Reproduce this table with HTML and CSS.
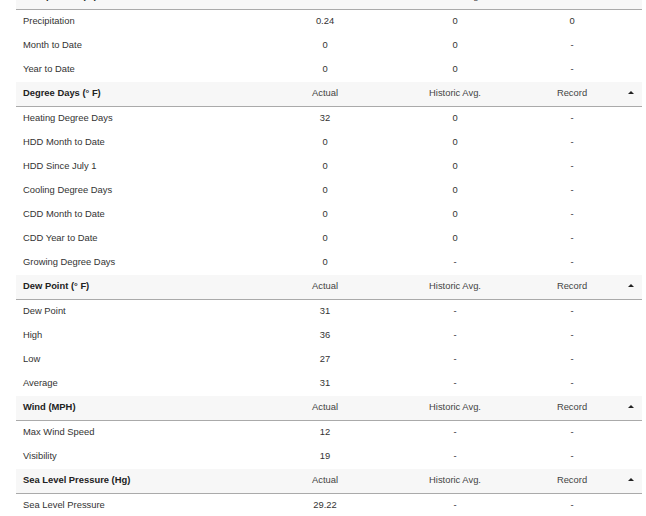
FILE: index.html
```html
<!DOCTYPE html>
<html>
<head>
<meta charset="utf-8">
<link rel="stylesheet" href="styles.css">
</head>
<body>
<div class="table">
  <div class="row head first">
    <div class="label">Precipitation (in)</div><div class="c">Actual</div><div class="c">Historic Avg.</div><div class="c">Record</div><div class="arrow"><span class="tri"></span></div>
  </div>
  <div class="row"><div class="label">Precipitation</div><div class="c">0.24</div><div class="c">0</div><div class="c">0</div><div></div></div>
  <div class="row"><div class="label">Month to Date</div><div class="c">0</div><div class="c">0</div><div class="c">-</div><div></div></div>
  <div class="row"><div class="label">Year to Date</div><div class="c">0</div><div class="c">0</div><div class="c">-</div><div></div></div>

  <div class="row head">
    <div class="label">Degree Days (° F)</div><div class="c">Actual</div><div class="c">Historic Avg.</div><div class="c">Record</div><div class="arrow"><span class="tri"></span></div>
  </div>
  <div class="row"><div class="label">Heating Degree Days</div><div class="c">32</div><div class="c">0</div><div class="c">-</div><div></div></div>
  <div class="row"><div class="label">HDD Month to Date</div><div class="c">0</div><div class="c">0</div><div class="c">-</div><div></div></div>
  <div class="row"><div class="label">HDD Since July 1</div><div class="c">0</div><div class="c">0</div><div class="c">-</div><div></div></div>
  <div class="row"><div class="label">Cooling Degree Days</div><div class="c">0</div><div class="c">0</div><div class="c">-</div><div></div></div>
  <div class="row"><div class="label">CDD Month to Date</div><div class="c">0</div><div class="c">0</div><div class="c">-</div><div></div></div>
  <div class="row"><div class="label">CDD Year to Date</div><div class="c">0</div><div class="c">0</div><div class="c">-</div><div></div></div>
  <div class="row"><div class="label">Growing Degree Days</div><div class="c">0</div><div class="c">-</div><div class="c">-</div><div></div></div>

  <div class="row head">
    <div class="label">Dew Point (° F)</div><div class="c">Actual</div><div class="c">Historic Avg.</div><div class="c">Record</div><div class="arrow"><span class="tri"></span></div>
  </div>
  <div class="row"><div class="label">Dew Point</div><div class="c">31</div><div class="c">-</div><div class="c">-</div><div></div></div>
  <div class="row"><div class="label">High</div><div class="c">36</div><div class="c">-</div><div class="c">-</div><div></div></div>
  <div class="row"><div class="label">Low</div><div class="c">27</div><div class="c">-</div><div class="c">-</div><div></div></div>
  <div class="row"><div class="label">Average</div><div class="c">31</div><div class="c">-</div><div class="c">-</div><div></div></div>

  <div class="row head">
    <div class="label">Wind (MPH)</div><div class="c">Actual</div><div class="c">Historic Avg.</div><div class="c">Record</div><div class="arrow"><span class="tri"></span></div>
  </div>
  <div class="row"><div class="label">Max Wind Speed</div><div class="c">12</div><div class="c">-</div><div class="c">-</div><div></div></div>
  <div class="row"><div class="label">Visibility</div><div class="c">19</div><div class="c">-</div><div class="c">-</div><div></div></div>

  <div class="row head">
    <div class="label">Sea Level Pressure (Hg)</div><div class="c">Actual</div><div class="c">Historic Avg.</div><div class="c">Record</div><div class="arrow"><span class="tri"></span></div>
  </div>
  <div class="row"><div class="label">Sea Level Pressure</div><div class="c">29.22</div><div class="c">-</div><div class="c">-</div><div></div></div>
</div>
</body>
</html>
```
FILE: styles.css
```css
html, body {
  margin: 0;
  padding: 0;
  background: #fff;
  overflow: hidden;
}
body {
  font-family: "Liberation Sans", Arial, sans-serif;
  font-size: 9.4px;
  color: #333;
}
.table {
  width: 626px;
  margin: -15px 0 0 16px;
}
.row {
  display: grid;
  grid-template-columns: 244px 130px 130px 104px 18px;
  height: 24px;
  align-items: center;
}
.row > div {
  padding-bottom: 4px;
}
.label {
  padding-left: 7px;
}
.c {
  text-align: center;
}
.head {
  background: #f7f7f7;
  border-bottom: 1px solid #aaa;
  color: #444;
}
.head .label {
  font-weight: bold;
  color: #222;
}
.arrow {
  display: flex;
  justify-content: flex-start;
  padding-left: 4px;
}
.tri {
  width: 0;
  height: 0;
  border-left: 3px solid transparent;
  border-right: 3px solid transparent;
  border-bottom: 3px solid #222;
}
```
